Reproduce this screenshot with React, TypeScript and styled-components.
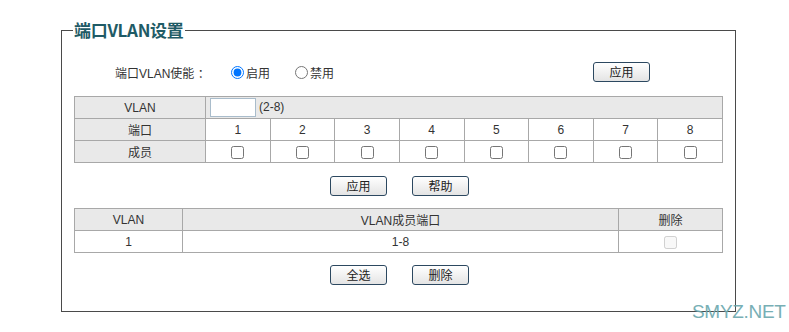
import React, { useState } from 'react'
import styled, { createGlobalStyle } from 'styled-components'

const GlobalStyle = createGlobalStyle`
  html, body {
    margin: 0;
    padding: 0;
    background: #ffffff;
  }
  body {
    font-family: "Liberation Sans", "Noto Sans CJK SC", Arial, sans-serif;
    font-size: 12px;
    color: #333333;
  }
`

const Page = styled.div`
  position: relative;
  width: 789px;
  height: 332px;
  padding: 20px 0 0 61px;
  box-sizing: border-box;
`

const Frame = styled.fieldset`
  width: 675px;
  box-sizing: border-box;
  margin: 0;
  padding: 0 12px 26px 12px;
  border: 1px solid #4a4a4a;
  min-width: 0;
`

const Title = styled.legend`
  margin-left: -1px;
  padding: 0 1px;
  font-family: "Noto Sans CJK SC", "Liberation Sans", sans-serif;
  font-size: 17px;
  line-height: 20px;
  font-weight: 700;
  letter-spacing: -0.3px;
  color: #1f5b66;
`

const EnableRow = styled.div`
  display: flex;
  align-items: center;
  height: 24px;
  margin-top: 20px;
  padding: 0 73px 0 41px;
`

const RowLabel = styled.span`
  width: 116px;
`

const RadioLabel = styled.label`
  display: flex;
  align-items: center;
  margin-right: 25px;
  gap: 2px;
`

const Radio = styled.input`
  margin: 0;
  width: 13px;
  height: 13px;
`

const Button = styled.button`
  width: 57px;
  height: 20px;
  padding: 0;
  border: 1px solid #2c4860;
  border-radius: 3px;
  background: linear-gradient(#ffffff, #e4e4e4);
  font-family: "Noto Sans CJK SC", "Liberation Sans", sans-serif;
  font-size: 12px;
  color: #222222;
  line-height: 18px;
`

const PushRight = styled.div`
  margin-left: auto;
  display: flex;
`

const Grid = styled.table<{ $top: number }>`
  width: 649px;
  margin-top: ${p => p.$top}px;
  border-collapse: collapse;
  table-layout: fixed;
`

const Cell = styled.td<{ $head?: boolean; $left?: boolean }>`
  height: 21px;
  padding: 0;
  border: 1px solid #a8a8a8;
  background: ${p => (p.$head ? '#e9e9e9' : '#ffffff')};
  text-align: ${p => (p.$left ? 'left' : 'center')};
  vertical-align: middle;
  color: #333333;
`

const VlanInput = styled.input`
  width: 46px;
  height: 19px;
  box-sizing: border-box;
  margin: 0 3px 0 4px;
  padding: 0 2px;
  border: 1px solid #a9bccb;
  background: #ffffff;
  vertical-align: middle;
`

const Check = styled.input`
  margin: 0;
  width: 13px;
  height: 13px;
  vertical-align: middle;
`

const ButtonRow = styled.div<{ $top: number }>`
  display: flex;
  justify-content: center;
  gap: 25px;
  margin-top: ${p => p.$top}px;
  padding-left: 2px;
`

const Watermark = styled.div`
  position: absolute;
  left: 692px;
  top: 301px;
  font-family: "Liberation Sans", Arial, sans-serif;
  font-size: 19px;
  letter-spacing: -0.3px;
  color: #6aa7ae;
  opacity: 0.9;
`

const ports = [1, 2, 3, 4, 5, 6, 7, 8]

export default function App() {
  const [enabled, setEnabled] = useState(true)
  const [members, setMembers] = useState<boolean[]>(ports.map(() => false))

  const toggle = (i: number) =>
    setMembers(m => m.map((v, idx) => (idx === i ? !v : v)))

  return (
    <>
      <GlobalStyle />
      <Page>
        <Frame>
          <Title>端口VLAN设置</Title>
          <EnableRow>
            <RowLabel>端口VLAN使能 ：</RowLabel>
            <RadioLabel>
              <Radio type="radio" name="en" checked={enabled} onChange={() => setEnabled(true)} />
              启用
            </RadioLabel>
            <RadioLabel>
              <Radio type="radio" name="en" checked={!enabled} onChange={() => setEnabled(false)} />
              禁用
            </RadioLabel>
            <PushRight>
              <Button>应用</Button>
            </PushRight>
          </EnableRow>

          <Grid $top={12}>
            <colgroup>
              <col style={{ width: 131 }} />
              {ports.map(p => <col key={p} />)}
            </colgroup>
            <tbody>
              <tr>
                <Cell $head>VLAN</Cell>
                <Cell $head $left colSpan={8}>
                  <VlanInput type="text" />(2-8)
                </Cell>
              </tr>
              <tr>
                <Cell $head>端口</Cell>
                {ports.map(p => <Cell key={p}>{p}</Cell>)}
              </tr>
              <tr>
                <Cell $head>成员</Cell>
                {ports.map((p, i) => (
                  <Cell key={p}>
                    <Check type="checkbox" checked={members[i]} onChange={() => toggle(i)} />
                  </Cell>
                ))}
              </tr>
            </tbody>
          </Grid>

          <ButtonRow $top={13}>
            <Button>应用</Button>
            <Button>帮助</Button>
          </ButtonRow>

          <Grid $top={12}>
            <colgroup>
              <col style={{ width: 108 }} />
              <col />
              <col style={{ width: 104 }} />
            </colgroup>
            <tbody>
              <tr>
                <Cell $head>VLAN</Cell>
                <Cell $head>VLAN成员端口</Cell>
                <Cell $head>删除</Cell>
              </tr>
              <tr>
                <Cell>1</Cell>
                <Cell>1-8</Cell>
                <Cell>
                  <Check type="checkbox" disabled />
                </Cell>
              </tr>
            </tbody>
          </Grid>

          <ButtonRow $top={12}>
            <Button>全选</Button>
            <Button>删除</Button>
          </ButtonRow>
        </Frame>
        <Watermark>SMYZ.NET</Watermark>
      </Page>
    </>
  )
}
